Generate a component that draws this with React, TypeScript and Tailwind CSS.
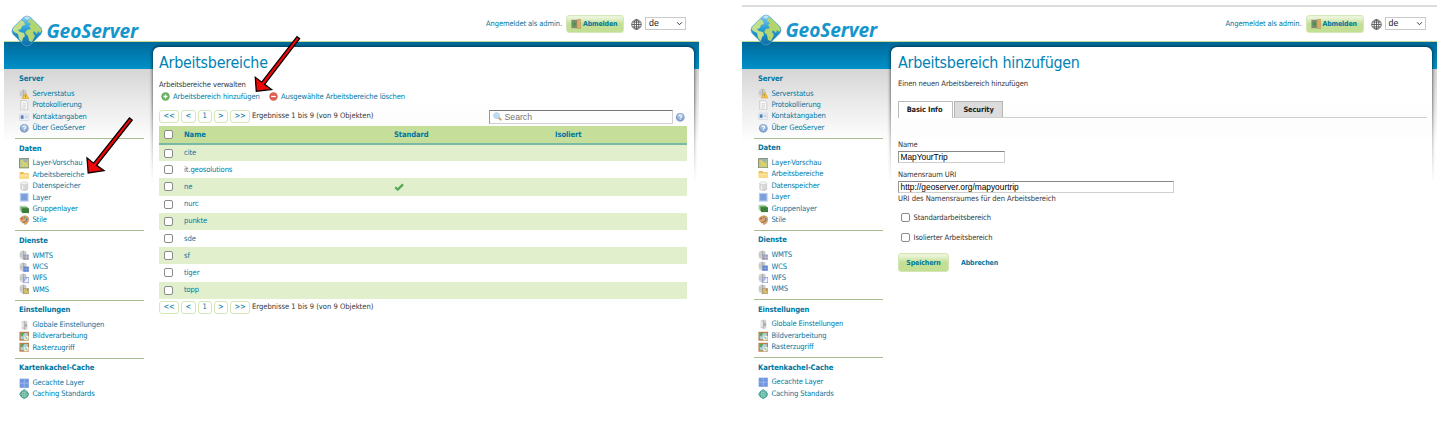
import React from "react";

type IconName =
  | "status" | "page" | "card" | "help" | "map" | "folder" | "db" | "layer" | "group"
  | "style" | "server" | "serverBlue" | "serverPage" | "serverMap" | "settings" | "raster" | "grid" | "globe";

function Cylinder() {
  return (
    <>
      <path d="M1 2 L5 0.6 L8.5 1.6 V9.6 L5 11 L1 9.4Z" fill="#c9c9c9" />
      <path d="M1 2 L4 3 V10.6 L1 9.4Z" fill="#e2e2e2" />
      <path d="M1.6 3v5M3 3.4v5.2" stroke="#a9a9a9" strokeWidth=".6" />
      <path d="M5 1v9.6" stroke="#8f8f8f" strokeWidth=".6" />
    </>
  );
}

function Icon({ name }: { name: IconName }) {
  const art: Record<IconName, React.ReactNode> = {
    status: (
      <>
        <Cylinder />
        <path d="M7.6 4.6 L11.8 11.4 H3.6Z" fill="#f8c948" stroke="#d99a1c" strokeWidth=".6" />
        <path d="M7.6 6.8v2.4M7.6 9.9v.8" stroke="#8a6a20" strokeWidth=".7" />
      </>
    ),
    page: (
      <>
        <path d="M2 .8H7.6L10 3.2V11.2H2Z" fill="#fafafa" stroke="#b5b5b5" strokeWidth=".7" />
        <path d="M4 4.2H8M4 6H8M4 7.8H8M4 9.4H7" stroke="#b9b9b9" strokeWidth=".6" />
      </>
    ),
    card: (
      <>
        <rect x=".8" y="2.4" width="10.4" height="7.2" rx=".6" fill="#eef2f7" stroke="#c3cedb" strokeWidth=".7" />
        <rect x="2" y="3.8" width="3.2" height="4" fill="#5482bd" />
        <path d="M6.4 4.6H10M6.4 6.4H10" stroke="#a5b3c4" strokeWidth=".7" />
      </>
    ),
    help: (
      <>
        <circle cx="6" cy="6" r="5" fill="#7d9fcb" />
        <circle cx="6" cy="4.8" r="3.6" fill="#a0bbdd" />
        <path d="M4.5 4.8a1.5 1.4 0 1 1 2.2 1.3q-.7.4-.7 1.1M6 8.2v1" stroke="#fff" strokeWidth="1.2" fill="none" />
      </>
    ),
    map: (
      <>
        <rect x=".7" y=".7" width="10.6" height="10.6" fill="#b9cf92" stroke="#7d8063" strokeWidth="1" />
        <path d="M1.2 4 4 2 7 5 10.8 2V1.2H1.2Z" fill="#95b8c0" />
        <path d="M2 2.5 6 6 10 9.5M6 6 4 10" stroke="#f5d24a" strokeWidth="1.3" fill="none" />
        <circle cx="8" cy="4" r="1" fill="#d9936e" />
      </>
    ),
    folder: (
      <>
        <path d="M.8 2.4H5L6 3.6H11.2V10H.8Z" fill="#efbd55" />
        <path d="M.8 5H11.2V10H.8Z" fill="#fbdc86" />
        <path d="M2 5.8H10" stroke="#fff0bd" strokeWidth="1" />
      </>
    ),
    db: (
      <>
        <path d="M2 2.6V9.6Q6 12.4 10 9.6V2.6Z" fill="#d7d7d7" stroke="#b4b4b4" strokeWidth=".5" />
        <ellipse cx="6" cy="2.6" rx="4" ry="1.7" fill="#f4f4f4" stroke="#bdbdbd" strokeWidth=".5" />
        <path d="M4 5v5" stroke="#f5f5f5" strokeWidth="1.4" />
      </>
    ),
    layer: (
      <>
        <rect x="1" y="1" width="10" height="10" fill="#b4caec" />
        <rect x="2.4" y="2.4" width="7.2" height="7.2" fill="#7b9fda" />
      </>
    ),
    group: (
      <>
        <rect x=".6" y="2" width="8" height="5.6" fill="#b5d8b4" />
        <rect x="2" y="3.4" width="8" height="5.6" fill="#6fac6b" />
        <rect x="3.4" y="4.8" width="8" height="5.6" fill="#3d7d3d" />
      </>
    ),
    style: (
      <>
        <path d="M1 4Q3 .6 7 .8 11.4 1.2 11.2 5.4 11 9.4 7 11 5.4 10.6 6 8.8 2 9.6 1 4Z" fill="#dca46c" stroke="#b57b48" strokeWidth=".5" />
        <circle cx="3.6" cy="4" r="1.1" fill="#d24b3d" />
        <circle cx="6.6" cy="2.8" r="1" fill="#61a553" />
        <circle cx="9" cy="4.8" r="1.1" fill="#4d83cc" />
        <path d="M4 9 9 6.6" stroke="#7d6041" strokeWidth="1" />
      </>
    ),
    server: (
      <>
        <Cylinder />
        <rect x="5.2" y="5.2" width="6" height="6" fill="#8d9ac0" />
        <path d="M5.2 8.2h6M8.2 5.2v6" stroke="#e8e2d6" strokeWidth=".6" />
        <rect x="5.6" y="8.6" width="2.2" height="2.2" fill="#b98f8a" />
      </>
    ),
    serverBlue: (
      <>
        <Cylinder />
        <rect x="5.2" y="5.2" width="6" height="6" fill="#5b7fd0" />
        <path d="M5.2 8.2h6M8.2 5.2v6" stroke="#a9bfec" strokeWidth=".6" />
      </>
    ),
    serverPage: (
      <>
        <Cylinder />
        <rect x="5.4" y="5" width="5.8" height="6.2" fill="#f3f6ff" stroke="#6f8ccd" strokeWidth=".7" />
        <path d="M6.6 9.6V6.6H9" stroke="#5b7fd0" strokeWidth=".9" fill="none" />
      </>
    ),
    serverMap: (
      <>
        <Cylinder />
        <rect x="5.2" y="5.2" width="6" height="6" fill="#c4bf7a" stroke="#a08a5e" strokeWidth=".6" />
        <path d="M6 6 10.6 10.6" stroke="#f0c948" strokeWidth="1.1" />
        <circle cx="9.6" cy="6.8" r=".8" fill="#c65a44" />
      </>
    ),
    settings: (
      <>
        <path d="M3 1.6 7 .6 9.6 1.6V10.2L7 11.4 3 10.2Z" fill="#d4d4d4" />
        <path d="M6.4 1.4V11" stroke="#9c9c9c" strokeWidth=".7" />
        <path d="M4.4 3v5" stroke="#f2f2f2" strokeWidth="1.2" />
        <path d="M8 4v4M7 6.4h2" stroke="#8c8c8c" strokeWidth=".8" />
      </>
    ),
    raster: (
      <>
        <rect x=".5" y=".9" width="11" height="10.2" fill="#b9804a" />
        <rect x="2" y="2.4" width="8" height="7" fill="#a9d0dc" />
        <path d="M2 2.4H6L4 6.4 2 5.4Z" fill="#5fa35b" />
        <rect x="6" y="5.6" width="5" height="5" fill="#eef1e6" />
        <path d="M7.2 6.4 9.6 9.6" stroke="#6ba860" strokeWidth="1.1" />
      </>
    ),
    grid: (
      <>
        <rect x=".8" y=".8" width="10.4" height="10.4" fill="#7396e0" />
        <path d="M6 .8V11.2M.8 6H11.2" stroke="#a4bdf0" strokeWidth=".9" />
      </>
    ),
    globe: (
      <>
        <path d="M6 .3 11.7 6 6 11.7 .3 6Z" fill="#3e9f94" stroke="#3e9f94" strokeWidth=".6" strokeLinejoin="round" />
        <circle cx="6" cy="6" r="4.7" fill="#3e9f94" />
        <path d="M6 1V11M1 6H11M3.4 3.4Q6 5 8.6 3.4M3.4 8.6Q6 7 8.6 8.6M4.4 2.4Q3 6 4.4 9.6M7.6 2.4Q9 6 7.6 9.6" stroke="#bfe7c8" strokeWidth=".6" fill="none" />
      </>
    ),
  };
  return (
    <svg viewBox="0 0 12 12" className="h-[10.5px] w-[10.5px] shrink-0">
      {art[name]}
    </svg>
  );
}

const sections: { title: string; items: [IconName, string][] }[] = [
  { title: "Server", items: [["status", "Serverstatus"], ["page", "Protokollierung"], ["card", "Kontaktangaben"], ["help", "Über GeoServer"]] },
  {
    title: "Daten",
    items: [["map", "Layer-Vorschau"], ["folder", "Arbeitsbereiche"], ["db", "Datenspeicher"], ["layer", "Layer"], ["group", "Gruppenlayer"], ["style", "Stile"]],
  },
  { title: "Dienste", items: [["server", "WMTS"], ["serverBlue", "WCS"], ["serverPage", "WFS"], ["serverMap", "WMS"]] },
  { title: "Einstellungen", items: [["settings", "Globale Einstellungen"], ["raster", "Bildverarbeitung"], ["raster", "Rasterzugriff"]] },
  { title: "Kartenkachel-Cache", items: [["grid", "Gecachte Layer"], ["globe", "Caching Standards"]] },
];

function Sidebar({ more }: { more?: boolean }) {
  return (
    <nav className={more ? "w-[129px] shrink-0 pt-[28px] text-[#0076a1]" : "w-[129px] shrink-0 pt-[27.6px] text-[#0076a1]"}>
      {sections.map((s, i) => (
        <div key={s.title} className={i === 0 ? "pb-[4.4px]" : "border-t border-[#a9bd92] pb-[4.4px]"}>
          <h3 className="flex h-[18.4px] items-center pl-[4px] text-[7.6px] font-bold">{s.title}</h3>
          {s.items.map(([icon, label]) => (
            <div key={label} className="flex h-[11.4px] items-center gap-[3.4px] pl-[3.5px]">
              <Icon name={icon} />
              <span className="whitespace-nowrap">{label}</span>
            </div>
          ))}
        </div>
      ))}
      {more && <div className="-mt-[3.5px] ml-[5px] h-px w-[8px] bg-[#a9c3ea]" />}
    </nav>
  );
}

function Logo() {
  return (
    <svg viewBox="0 0 132 36" className="h-[36px] w-[132px]">
      <defs>
        <linearGradient id="diamond" x1="0" y1="0" x2="0" y2="1">
          <stop offset="0" stopColor="#8fd0ee" />
          <stop offset=".45" stopColor="#2a9fd6" />
          <stop offset="1" stopColor="#0a6aa6" />
        </linearGradient>
        <clipPath id="diamondClip">
          <path d="M12.6 2.2Q16 -.4 19.4 2.2L29.8 12.6Q32.4 16 29.8 19.4L19.4 29.8Q16 32.4 12.6 29.8L2.2 19.4Q-.4 16 2.2 12.6Z" />
        </clipPath>
      </defs>
      <g clipPath="url(#diamondClip)">
        <rect width="32" height="32" fill="url(#diamond)" />
        <path d="M1 14 5 10 10 5 13 7 14 10 11 11 10 14 7 15 9 17 13 18 14 21 12 23 11 27 8 24 7 19 3 17Z" fill="#c3df8b" />
        <path d="M18 4 22 5 27 10 31 15 29 18 27 16 26 19 23 16 22 18 24 21 21 27 18 26 17 21 14 18 16 15 20 14 18 11 20 9 17 7Z" fill="#b3d56f" />
        <path d="M13 3 16 0 19 3 16 5Z" fill="#eaf5fa" opacity=".6" />
      </g>
      <path d="M12.6 2.2Q16 -.4 19.4 2.2L29.8 12.6Q32.4 16 29.8 19.4L19.4 29.8Q16 32.4 12.6 29.8L2.2 19.4Q-.4 16 2.2 12.6Z" fill="none" stroke="#5fa9cc" strokeWidth=".9" opacity=".7" />
      <text x="35.5" y="23.3" textLength="91.5" lengthAdjust="spacingAndGlyphs" fill="#1496cc" fontSize="19.5" fontWeight="700" fontStyle="italic" fontFamily="'Noto Sans', 'Open Sans', sans-serif">
        GeoServer
      </text>
    </svg>
  );
}

function Header({ shifted }: { shifted?: boolean }) {
  return (
    <header className="relative z-10 flex h-[42px] shrink-0 border-b border-[#c3d993] bg-white">
      <div className={shifted ? "h-[41px] w-[483.5px] pt-[14px] pl-[8px]" : "h-[41px] w-[482px] pt-[14.5px] pl-[7px]"}>
        <Logo />
      </div>
      <div className="mt-[15px] flex h-[18px] items-center text-[#0076a1]">
        <span className="w-[80px] whitespace-nowrap text-[7.5px]">Angemeldet als admin.</span>
        <button className="flex h-[18px] w-[58px] items-center gap-[2px] rounded-[3px] border border-[#d6e8b9] bg-linear-to-b from-[#eaf4d8] from-10% to-[#c3df93] to-50% pl-[4px] text-[7px] font-bold tracking-[-0.15px]">
          <svg viewBox="0 0 12 12" className="h-[10px] w-[10px]">
            <rect x=".5" y="1" width="7" height="10" fill="#7b8a70" />
            <path d="M7 1 11.4 0V12L7 11Z" fill="#d9ab69" stroke="#a97a41" strokeWidth=".4" />
            <path d="M1 6H5M3.4 4 5.4 6 3.4 8" stroke="#3b9a46" strokeWidth="1.4" fill="none" />
          </svg>
          Abmelden
        </button>
        <svg viewBox="0 0 12 12" className="ml-[7px] h-[11px] w-[11px]" fill="none" stroke="#4c4c4c" strokeWidth=".9">
          <circle cx="6" cy="6" r="5.2" />
          <ellipse cx="6" cy="6" rx="2.5" ry="5.2" />
          <path d="M6 .8V11.2M.8 6H11.2M1.6 3.4H10.4M1.6 8.6H10.4" />
        </svg>
        <div className="ml-[3px] flex h-[13px] w-[41px] -translate-y-px items-center justify-between border border-[#c9c9c9] bg-white pr-[2px] pl-[3px] font-['Liberation_Sans',sans-serif] text-[8.8px] tracking-normal text-[#222]">
          de
          <svg viewBox="0 0 8 8" className="h-[7px] w-[7px]" fill="none" stroke="#333" strokeWidth="1.1">
            <path d="M1.2 2.6 4 5.4 6.8 2.6" />
          </svg>
        </div>
      </div>
    </header>
  );
}

function Shell({ title, shifted, children }: { title: string; shifted?: boolean; children: React.ReactNode }) {
  return (
    <div className="flex w-[695px] flex-col overflow-hidden bg-white">
      {shifted && <div className="relative z-20 mt-[5px] -mb-[7px] h-[2px] shrink-0 bg-[#dcdcdc]" />}
      <Header shifted={shifted} />
      <div className="relative h-[358px] overflow-hidden bg-[linear-gradient(#006a9b,#0090c8_27px,#d5d5d5_27px,#e9e9e9_58px,#ffffff_100px)]">
        <div className="absolute top-0 left-[142px] h-[142px] w-[553px] overflow-hidden mask-[linear-gradient(#000_60px,#0006_110px,transparent_141px)]">
          <div className="mt-[5px] ml-[7px] h-[170px] w-[541px] rounded-[6px] bg-white shadow-[0_0_3px_1px_rgba(0,0,0,0.5)]" />
        </div>
        <div className={shifted ? "relative flex pl-[12px]" : "relative flex pl-[11px]"}>
          <Sidebar more={!shifted} />
          <main className="ml-[15px] w-[529px] shrink-0 pt-[11px]">
            <h1 className="h-[25px] text-[15.9px] leading-[20px] tracking-[-0.25px] text-[#0083b4]">{title}</h1>
            {children}
          </main>
        </div>
      </div>
    </div>
  );
}

function Check() {
  return <span className="block h-[9px] w-[9px] shrink-0 rounded-[2px] border border-[#8a8a8a] bg-white" />;
}

function Pager() {
  const box = "flex h-[13px] items-center justify-center rounded-[3px] border border-[#d5e8b5] text-[#0076a1]";
  return (
    <div className="flex items-center gap-[2px]">
      <span className={`${box} w-[20px]`}>&lt;&lt;</span>
      <span className={`${box} w-[14.5px]`}>&lt;</span>
      <span className={`${box} w-[14px]`}>1</span>
      <span className={`${box} w-[14.5px]`}>&gt;</span>
      <span className={`${box} w-[20px]`}>&gt;&gt;</span>
      <span className="whitespace-nowrap tracking-normal text-[#333]">Ergebnisse 1 bis 9 (von 9 Objekten)</span>
    </div>
  );
}

function RoundIcon({ minus }: { minus?: boolean }) {
  return (
    <svg viewBox="0 0 10 10" className="h-[9px] w-[9px]">
      <circle cx="5" cy="5" r="4.7" fill={minus ? "#dc5f52" : "#6bb061"} />
      <path d={minus ? "M2.4 5H7.6" : "M2.8 5H7.2M5 2.8V7.2"} stroke="#fff" strokeWidth="1.4" />
    </svg>
  );
}

const names = ["cite", "it.geosolutions", "ne", "nurc", "punkte", "sde", "sf", "tiger", "topp"];

function Workspaces() {
  return (
    <Shell title="Arbeitsbereiche">
      <div className="flex h-[12px] items-center pt-px text-[#333]">Arbeitsbereiche verwalten</div>
      <div className="flex h-[13px] items-center gap-[3px] pl-[2px] text-[#0076a1]">
        <RoundIcon />
        <span className="w-[93px] whitespace-nowrap">Arbeitsbereich hinzufügen</span>
        <RoundIcon minus />
        <span className="whitespace-nowrap">Ausgewählte Arbeitsbereiche löschen</span>
      </div>
      <div className="flex h-[23px] items-center pt-[3px]">
        <Pager />
        <div className="mt-px ml-auto flex h-[14px] w-[184px] items-center gap-[3px] border border-[#cfcfcf] border-t-[#777] border-l-[#999] pl-[3px] font-['Liberation_Sans',sans-serif] text-[8.7px] tracking-normal text-[#757575]">
          <svg viewBox="0 0 10 10" className="h-[9px] w-[9px]">
            <path d="M6 6 9.2 9.2" stroke="#c99558" strokeWidth="1.8" />
            <circle cx="4" cy="4" r="3.2" fill="#bcdcf5" stroke="#b3cbe4" strokeWidth=".9" />
          </svg>
          Search
        </div>
        <span className="mt-[2px] mr-[3px] ml-[2px]">
          <Icon name="help" />
        </span>
      </div>
      <table className="w-[528px] table-fixed border-collapse text-left text-[#0076a1]">
        <colgroup>
          <col className="w-[25px]" />
          <col className="w-[210px]" />
          <col className="w-[161px]" />
          <col />
        </colgroup>
        <thead>
          <tr className="h-[18px] border-b-2 border-[#7ab9a4] bg-[#c5df9a] text-[7.6px]">
            <th className="p-0 pl-[5px]"><Check /></th>
            <th className="p-0">Name</th>
            <th className="p-0">Standard</th>
            <th className="p-0">Isoliert</th>
          </tr>
        </thead>
        <tbody>
          {names.map((n) => (
            <tr key={n} className="h-[17.2px] odd:bg-[#e1efcd]">
              <td className="p-0 pl-[5px]"><Check /></td>
              <td className="p-0">{n}</td>
              <td className="p-0">
                {n === "ne" && (
                  <svg viewBox="0 0 10 8" className="h-[8px] w-[10px]">
                    <path d="M1.2 4.2 3.8 6.6 9 1.4" fill="none" stroke="#52a854" strokeWidth="2.2" />
                  </svg>
                )}
              </td>
              <td className="p-0" />
            </tr>
          ))}
        </tbody>
      </table>
      <div className="pt-[2px]">
        <Pager />
      </div>
    </Shell>
  );
}

function AddWorkspace() {
  const field = "flex items-center border border-[#cfcfcf] border-t-[#888] border-l-[#999] bg-white pl-[1.5px] font-['Liberation_Sans',sans-serif] text-[8.35px] tracking-normal text-black";
  return (
    <Shell title="Arbeitsbereich hinzufügen" shifted>
      <div className="flex h-[12px] items-center text-[#333]">Einen neuen Arbeitsbereich hinzufügen</div>
      <div className="mt-[11px] flex h-[17px] border-b border-[#cfcfcf] text-[7.4px] font-bold tracking-[-0.1px] text-[#222]">
        <div className="flex h-[17px] w-[55px] items-center justify-center border border-b-0 border-[#bbb] bg-white pr-[2px]">Basic Info</div>
        <div className="ml-px flex h-[16px] w-[49px] items-center justify-center border border-b-0 border-[#b5b5b5] bg-[#dcdcdc] pt-px">Security</div>
      </div>
      <div className="pt-[21px] text-[#333]">
        <div className="flex h-[12px] items-center">Name</div>
        <div className={`${field} h-[12px] w-[107px]`}>MapYourTrip</div>
        <div className="mt-[6px] flex h-[12px] items-center">Namensraum URI</div>
        <div className={`${field} h-[12px] w-[276px]`}>http://geoserver.org/mapyourtrip</div>
        <div className="flex h-[12px] items-center tracking-[-0.04px]">URI des Namensraumes für den Arbeitsbereich</div>
        <div className="mt-[6px] flex h-[14px] items-center gap-[3.5px] pl-[3px]"><span className="-mt-[2px]"><Check /></span>Standardarbeitsbereich</div>
        <div className="mt-[6px] flex h-[14px] items-center gap-[3.5px] pl-[3px]"><span className="-mt-[2px]"><Check /></span>Isolierter Arbeitsbereich</div>
        <div className="mt-[8px] flex items-center gap-[12px] text-[7px] font-bold tracking-[-0.13px] text-[#0076a1]">
          <button className="h-[19px] w-[51px] rounded-[3px] border border-[#d3e6b3] bg-linear-to-b from-[#eaf4d8] from-10% to-[#c3df93] to-50%">Speichern</button>
          <span>Abbrechen</span>
        </div>
      </div>
    </Shell>
  );
}

export default function App() {
  return (
    <div className="relative flex h-[440px] w-[1450px] gap-[43px] overflow-hidden bg-white pl-[4px] font-['DejaVu_Sans_Condensed','DejaVu_Sans',sans-serif] text-[7.55px] leading-[10px] tracking-[-0.1px] [font-stretch:condensed]">
      <Workspaces />
      <AddWorkspace />
      <svg className="pointer-events-none absolute top-0 left-0 z-30 h-[200px] w-[310px]" viewBox="0 0 310 200">
        <g fill="#f00808" stroke="#0a0000" strokeWidth="1.3" strokeLinejoin="miter">
          <path d="M256.3 91.2 255.3 77.3 261.7 82.2 297 36.7 299.6 38.7 264.6 84.3 271.5 89.6Z" />
          <path d="M88.2 173 87 158 93.6 163.2 129.5 118 132.2 120 96.6 165.4 104 170.7Z" />
        </g>
      </svg>
    </div>
  );
}
